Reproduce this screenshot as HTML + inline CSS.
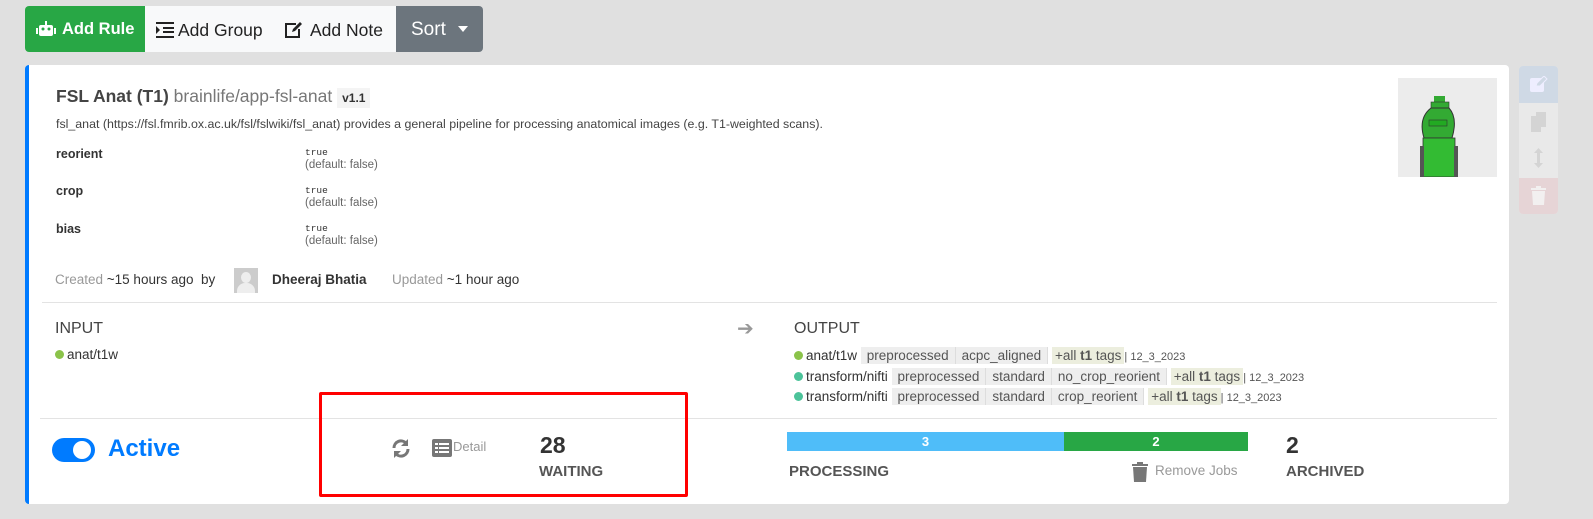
<!DOCTYPE html>
<html><head><style>
body{margin:0;width:1593px;height:519px;background:#e0e0e0;font-family:"Liberation Sans",sans-serif;position:relative;overflow:hidden;color:#333}
.a{position:absolute;white-space:nowrap}
.tag{background:#eee;color:#555;padding:1px 6px;border-right:1px solid #ddd}
.tg{background:#eceede;color:#555;padding:1px 3px}
.dot{display:inline-block;width:9px;height:9px;border-radius:50%;margin-right:3px}
.row{font-size:13.5px;color:#333}
.dt{font-size:11px;color:#555}
</style></head><body>
<div class="a" style="left:25px;top:6px;width:458px;height:46px;border-radius:4px;overflow:hidden;background:#f8f9fa">
 <div class="a" style="left:0;top:0;width:120px;height:46px;background:#28a745;color:#fff;font-weight:bold;font-size:16.5px;line-height:46px">
  <svg style="position:absolute;left:11px;top:15px" width="20" height="16" viewBox="0 0 20 16"><rect x="3" y="4" width="14" height="11" rx="2" fill="#fff"/><rect x="9" y="0" width="2" height="4" fill="#fff"/><rect x="0" y="7" width="2" height="6" fill="#fff"/><rect x="18" y="7" width="2" height="6" fill="#fff"/><circle cx="7" cy="8" r="1.5" fill="#28a745"/><circle cx="13" cy="8" r="1.5" fill="#28a745"/></svg>
  <span style="position:absolute;left:37px">Add Rule</span></div>
 <svg class="a" style="left:131px;top:16px" width="18" height="16" viewBox="0 0 18 16"><rect x="0" y="0" width="18" height="2" fill="#222"/><rect x="7" y="5" width="11" height="2" fill="#222"/><rect x="7" y="9" width="11" height="2" fill="#222"/><rect x="0" y="14" width="18" height="2" fill="#222"/><path d="M0 4l4 4-4 4z" fill="#222"/></svg>
 <span class="a" style="left:153px;top:14px;font-size:17.5px;color:#222">Add Group</span>
 <svg class="a" style="left:259px;top:15px" width="19" height="18" viewBox="0 0 19 18"><path d="M12 3H2v13h13V8" fill="none" stroke="#222" stroke-width="2"/><path d="M8 11l1-3 7-7 2 2-7 7z" fill="#222"/></svg>
 <span class="a" style="left:285px;top:14px;font-size:17.5px;color:#222">Add Note</span>
 <div class="a" style="left:371px;top:0;width:87px;height:46px;background:#6c757d;color:#fff;font-size:19px;line-height:47px"><span style="position:absolute;left:15px">Sort</span><span style="position:absolute;left:62px;top:20px;border:5px solid transparent;border-top:6px solid #fff;height:0;width:0;line-height:0"></span></div>
</div>

<div class="a" style="left:25px;top:65px;width:1484px;height:439px;background:#fff;border-radius:4px;border-left:4px solid #007bff;box-sizing:border-box"></div>
<div class="a" style="left:56px;top:86px;font-size:17.5px"><b style="color:#444">FSL Anat (T1)</b> <span style="color:#777">brainlife/app-fsl-anat</span> <span style="background:#f4f4f4;font-size:12px;font-weight:bold;padding:3px 5px;color:#333">v1.1</span></div>
<div class="a" style="left:56px;top:117px;font-size:12.4px;color:#444">fsl_anat (https://fsl.fmrib.ox.ac.uk/fsl/fslwiki/fsl_anat) provides a general pipeline for processing anatomical images (e.g. T1-weighted scans).</div>
<div class="a" style="left:56px;top:147px;font-size:12.5px;font-weight:bold;color:#333">reorient</div>
<div class="a" style="left:56px;top:184px;font-size:12.5px;font-weight:bold;color:#333">crop</div>
<div class="a" style="left:56px;top:222px;font-size:12.5px;font-weight:bold;color:#333">bias</div>
<div class="a" style="left:305px;top:146px;font-size:11.5px;line-height:12px;color:#666"><span style="font-family:'Liberation Mono',monospace;font-size:9.5px;color:#333">true</span><br>(default: false)</div>
<div class="a" style="left:305px;top:184px;font-size:11.5px;line-height:12px;color:#666"><span style="font-family:'Liberation Mono',monospace;font-size:9.5px;color:#333">true</span><br>(default: false)</div>
<div class="a" style="left:305px;top:222px;font-size:11.5px;line-height:12px;color:#666"><span style="font-family:'Liberation Mono',monospace;font-size:9.5px;color:#333">true</span><br>(default: false)</div>
<div class="a" style="left:55px;top:272px;font-size:13.5px;color:#999">Created <span style="color:#333">~15 hours ago</span> &nbsp;<span style="color:#333">by</span></div>
<div class="a" style="left:234px;top:268px;width:24px;height:25px;background:#ccc"><div style="position:absolute;left:7px;top:4px;width:10px;height:11px;border-radius:50%;background:#eee"></div><div style="position:absolute;left:3px;top:15px;width:18px;height:10px;border-radius:8px 8px 0 0;background:#eee"></div></div>
<div class="a" style="left:272px;top:272px;font-size:13.5px;font-weight:bold;color:#333">Dheeraj Bhatia</div>
<div class="a" style="left:392px;top:272px;font-size:13.5px;color:#999">Updated <span style="color:#333">~1 hour ago</span></div>
<div class="a" style="left:1398px;top:78px;width:99px;height:99px;background:#ececec">
<svg width="99" height="99" viewBox="0 0 99 99"><rect x="36" y="18" width="11" height="6" fill="#3a3"/><rect x="33" y="24" width="18" height="6" fill="#3a3" stroke="#333" stroke-width=".6"/><path d="M26 60 Q20 40 33 30 L51 30 Q60 40 54 60Z" fill="#3a3" stroke="#333" stroke-width="1"/><rect x="31" y="42" width="18" height="6" fill="#2a2" stroke="#333" stroke-width=".6"/><rect x="25" y="60" width="32" height="39" fill="#3b3" stroke="#333" stroke-width=".8"/><rect x="22" y="68" width="4" height="31" fill="#555"/><rect x="56" y="68" width="4" height="31" fill="#555"/></svg></div>
<div class="a" style="left:1519px;top:66px;width:39px;height:148px;border-radius:4px;overflow:hidden;background:#e9e9e9">
 <div style="height:37px;background:#cfd9e5"></div><div style="position:absolute;top:112px;width:39px;height:36px;background:#e6d4d6"></div>
 <svg class="a" style="left:11px;top:10px" width="18" height="17" viewBox="0 0 18 17"><rect x="0" y="2" width="14" height="14" rx="2" fill="#eef"/><path d="M6 10l1-3 7-7 3 3-7 7z" fill="#cfd9e5" stroke="#eef"/></svg>
 <svg class="a" style="left:12px;top:46px" width="16" height="20" viewBox="0 0 16 20"><rect x="0" y="4" width="10" height="16" fill="#d4d4d4"/><rect x="5" y="0" width="10" height="15" fill="#d4d4d4"/></svg>
 <svg class="a" style="left:15px;top:82px" width="9" height="20" viewBox="0 0 9 20"><path d="M4.5 0L9 5H6v10h3l-4.5 5L0 15h3V5H0z" fill="#d4d4d4"/></svg>
 <svg class="a" style="left:12px;top:120px" width="15" height="19" viewBox="0 0 15 19"><rect x="0" y="2" width="15" height="2" fill="#f2f0f0"/><rect x="5" y="0" width="5" height="2" fill="#f2f0f0"/><path d="M1 5h13l-1 14H2z" fill="#f2f0f0"/></svg>
</div>
<div class="a" style="left:42px;top:302px;width:1455px;height:1px;background:#e3e3e3"></div>
<div class="a" style="left:55px;top:320px;font-size:16px;color:#444">INPUT</div>
<div class="a row" style="left:55px;top:347px"><span class="dot" style="background:#8bc34a"></span>anat/t1w</div>
<div class="a" style="left:737px;top:316px;font-size:20px;color:#999">&#x2794;</div>
<div class="a" style="left:794px;top:320px;font-size:16px;color:#444">OUTPUT</div>
<div class="a row" style="left:794px;top:348px"><span class="dot" style="background:#8bc34a"></span>anat/t1w <span class="tag">preprocessed</span><span class="tag">acpc_aligned</span> <span class="tg">+all <b>t1</b> tags</span><span class="dt">| 12_3_2023</span></div>
<div class="a row" style="left:794px;top:369px"><span class="dot" style="background:#4cc39a"></span>transform/nifti <span class="tag">preprocessed</span><span class="tag">standard</span><span class="tag">no_crop_reorient</span> <span class="tg">+all <b>t1</b> tags</span><span class="dt">| 12_3_2023</span></div>
<div class="a row" style="left:794px;top:389px"><span class="dot" style="background:#4cc39a"></span>transform/nifti <span class="tag">preprocessed</span><span class="tag">standard</span><span class="tag">crop_reorient</span> <span class="tg">+all <b>t1</b> tags</span><span class="dt">| 12_3_2023</span></div>
<div class="a" style="left:40px;top:418px;width:1457px;height:1px;background:#e3e3e3"></div>
<div class="a" style="left:52px;top:438px;width:43px;height:24px;border-radius:12px;background:#007bff"><div style="position:absolute;left:21px;top:3px;width:18px;height:18px;border-radius:50%;background:#fff"></div></div>
<div class="a" style="left:108px;top:435px;font-size:24px;font-weight:bold;color:#007bff">Active</div>
<div class="a" style="left:319px;top:392px;width:369px;height:105px;border:3px solid #f00;box-sizing:border-box;border-radius:2px"></div>
<svg class="a" style="left:391px;top:439px" width="20" height="19" viewBox="0 0 20 19"><path d="M3 9a7 7 0 0 1 12-5" fill="none" stroke="#777" stroke-width="3"/><path d="M17 0v7h-7z" fill="#777"/><path d="M17 10a7 7 0 0 1-12 5" fill="none" stroke="#777" stroke-width="3"/><path d="M3 19v-7h7z" fill="#777"/></svg>
<svg class="a" style="left:432px;top:439px" width="20" height="18" viewBox="0 0 20 18"><rect width="20" height="18" rx="2" fill="#777"/><rect x="3" y="4" width="3" height="2" fill="#fff"/><rect x="7" y="4" width="10" height="2" fill="#fff"/><rect x="3" y="8" width="3" height="2" fill="#fff"/><rect x="7" y="8" width="10" height="2" fill="#fff"/><rect x="3" y="12" width="3" height="2" fill="#fff"/><rect x="7" y="12" width="10" height="2" fill="#fff"/></svg>
<div class="a" style="left:453px;top:439px;font-size:13px;color:#999">Detail</div>
<div class="a" style="left:540px;top:432px;font-size:23px;font-weight:bold;color:#333">28</div>
<div class="a" style="left:539px;top:463px;font-size:15px;font-weight:bold;color:#555">WAITING</div>
<div class="a" style="left:787px;top:432px;width:277px;height:19px;background:#4fbdf9;color:#fff;font-size:13px;font-weight:bold;text-align:center;line-height:19px">3</div>
<div class="a" style="left:1064px;top:432px;width:184px;height:19px;background:#28a745;color:#fff;font-size:13px;font-weight:bold;text-align:center;line-height:19px">2</div>
<div class="a" style="left:789px;top:463px;font-size:15px;font-weight:bold;color:#555">PROCESSING</div>
<svg class="a" style="left:1132px;top:462px" width="16" height="20" viewBox="0 0 16 20"><rect x="0" y="2" width="16" height="2" fill="#777"/><rect x="5" y="0" width="6" height="2" fill="#777"/><path d="M1 5h14l-1 15H2z" fill="#777"/></svg>
<div class="a" style="left:1155px;top:463px;font-size:13.5px;color:#999">Remove Jobs</div>
<div class="a" style="left:1286px;top:432px;font-size:23px;font-weight:bold;color:#333">2</div>
<div class="a" style="left:1286px;top:463px;font-size:15px;font-weight:bold;color:#555">ARCHIVED</div>
</body></html>
